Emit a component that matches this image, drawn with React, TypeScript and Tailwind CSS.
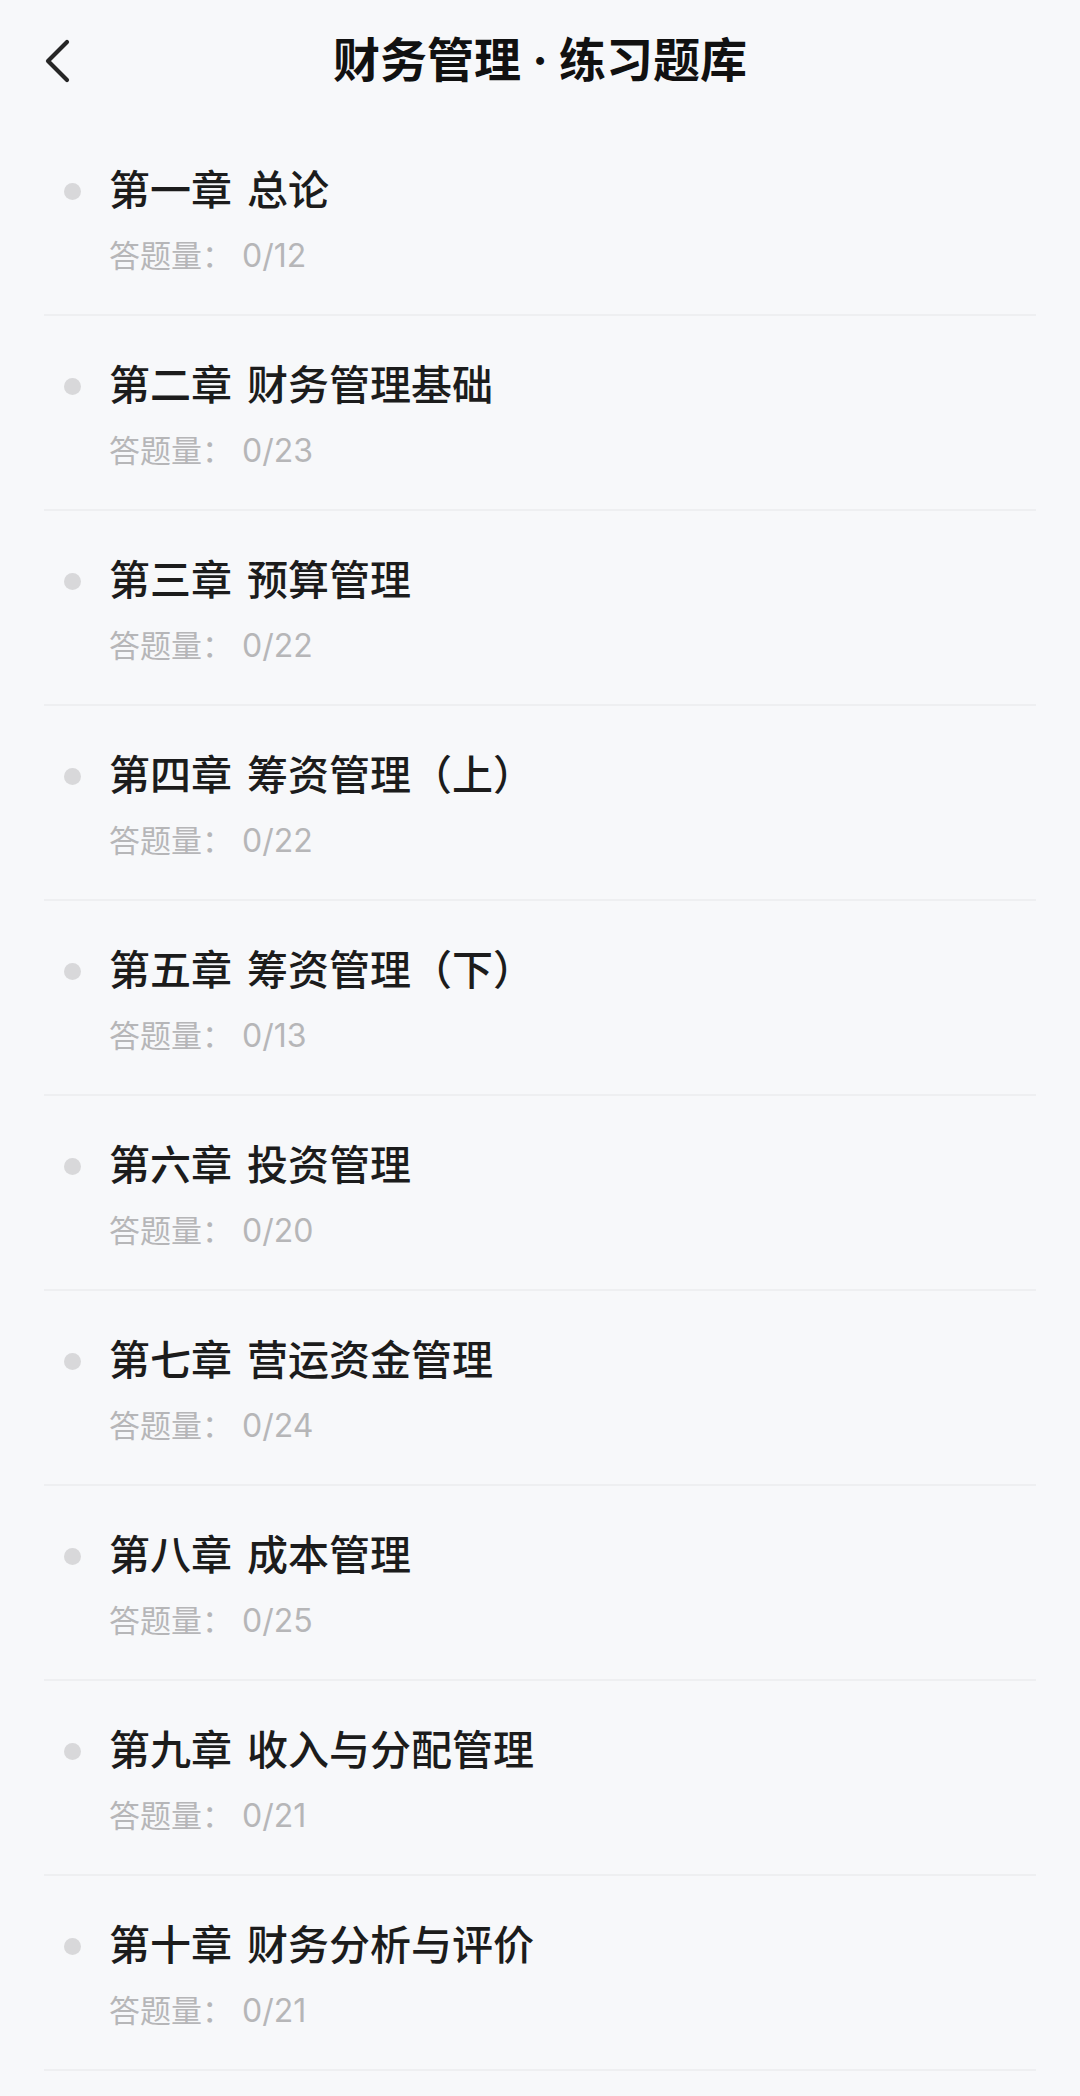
const chapters = [
  { title: "第一章 总论", total: 12 },
  { title: "第二章 财务管理基础", total: 23 },
  { title: "第三章 预算管理", total: 22 },
  { title: "第四章 筹资管理（上）", total: 22 },
  { title: "第五章 筹资管理（下）", total: 13 },
  { title: "第六章 投资管理", total: 20 },
  { title: "第七章 营运资金管理", total: 24 },
  { title: "第八章 成本管理", total: 25 },
  { title: "第九章 收入与分配管理", total: 21 },
  { title: "第十章 财务分析与评价", total: 21 },
];

const BackIcon = () => (
  <svg width="30" height="50" viewBox="0 0 30 50" fill="none">
    <path
      d="M24 6 L5 25 L24 44"
      stroke="#262626"
      strokeWidth="4.2"
      strokeLinecap="round"
      strokeLinejoin="round"
    />
  </svg>
);

const ChapterRow = ({ title, total }: { title: string; total: number }) => {
  return (
    <div className="flex flex-col border-b-2 border-[#eeeff1] pb-[38px] pl-[20px] pt-[45px]">
      <div className="flex h-[48px] items-center">
        <span className="mt-[2px] h-[17px] w-[17px] shrink-0 rounded-full bg-[#d8d8da]" />
        <p className="ml-[28px] text-[41px] font-medium leading-[48px] text-[#1c1c1c] [word-spacing:4px]">
          {title}
        </p>
      </div>
      <p className="ml-[45px] mt-[22px] text-[31px] leading-[40px] text-[#b6b6b8]">
        答题量：<span className="ml-[9px] text-[32px]">0/{total}</span>
      </p>
    </div>
  );
};

const App = () => {
  return (
    <div
      className="min-h-[2096px] w-full bg-[#f7f8fa]"
      style={{ fontFamily: 'Inter, "Noto Sans CJK SC", "Noto Sans", sans-serif' }}
    >
      <header className="grid h-[121px] grid-cols-[120px_1fr_120px] items-center">
        <div className="flex pl-[43px]">
          <BackIcon />
        </div>
        <h1 className="-mt-[2px] text-center text-[47px] font-bold leading-[56px] text-[#111111]">
          财务管理 · 练习题库
        </h1>
        <div />
      </header>

      <div className="mx-[44px] flex flex-col">
        {chapters.map((ch) => (
          <ChapterRow key={ch.title} title={ch.title} total={ch.total} />
        ))}
      </div>
    </div>
  );
};

export default App;
